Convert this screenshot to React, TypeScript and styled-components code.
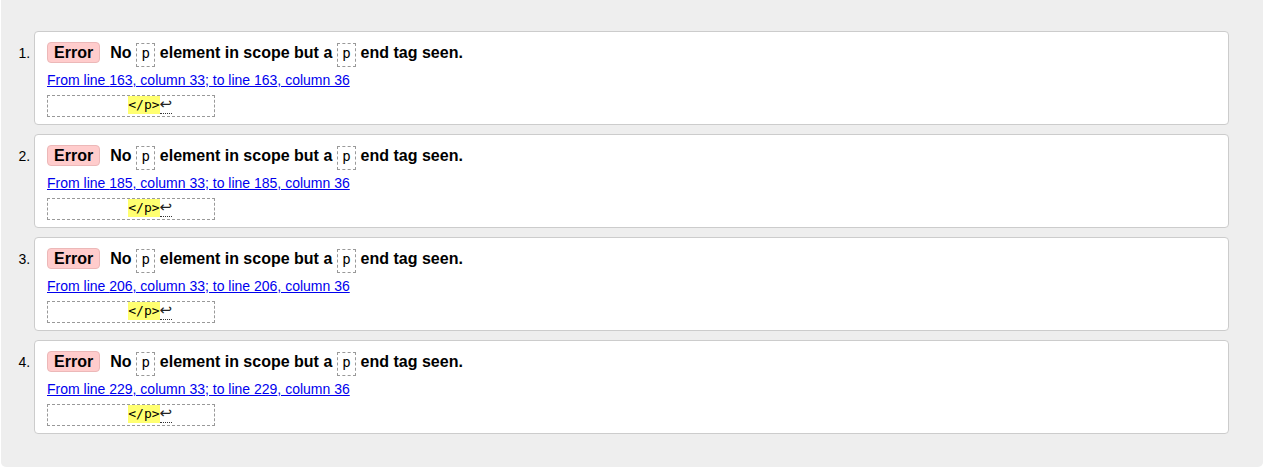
import React from "react";
import styled, { createGlobalStyle } from "styled-components";

const GlobalStyle = createGlobalStyle`
  html, body { margin: 0; padding: 0; background: #ffffff; }
  body { font-family: "Liberation Sans", Arial, sans-serif; }
`;

const Page = styled.div`
  margin-left: 1px;
  width: 1262px;
  height: 467px;
  background: #eeeeee;
  border-radius: 0 0 5px 5px;
  overflow: hidden;
`;

const List = styled.ol`
  margin: 0;
  padding: 31px 34px 0 33px;
  list-style: decimal outside;
`;

const Item = styled.li`
  box-sizing: border-box;
  height: 94px;
  margin: 0 0 9px;
  padding: 8px 12px 7px;
  background: #ffffff;
  border: 1px solid #cccccc;
  border-radius: 4px;
  font: 14px "Liberation Sans", Arial, sans-serif;
  color: #000000;
`;

const Message = styled.p`
  margin: 0;
  font-size: 16px;
  font-weight: 700;
  line-height: 26px;
  white-space: nowrap;
`;

const Badge = styled.strong`
  display: inline-block;
  line-height: 19px;
  padding: 0 6px;
  margin-right: 10px;
  border: 1px solid #ecb8b8;
  border-radius: 4px;
  background: #ffcccc;
`;

const Tag = styled.code`
  display: inline-block;
  box-sizing: border-box;
  height: 24px;
  padding: 1px 4.5px 0;
  line-height: 21px;
  border: 1px dashed #999999;
  font: 400 14px "DejaVu Sans Mono", monospace;
  color: #000000;
`;

const Location = styled.p`
  margin: 4px 0 0;
  line-height: 18px;
`;

const Link = styled.a`
  color: #0000ee;
  text-decoration: underline;
`;

const Extract = styled.code`
  display: block;
  box-sizing: border-box;
  width: 168px;
  height: 22px;
  margin-top: 6px;
  padding-left: 2px;
  border: 1px dashed #999999;
  font: 13px "DejaVu Sans Mono", monospace;
  line-height: 20px;
  white-space: pre;
  color: #000000;
`;

const Highlight = styled.mark`
  display: inline-block;
  vertical-align: 1px;
  line-height: 18px;
  background: #ffff70;
  color: #000000;
`;

const LineBreak = styled.span`
  display: inline-block;
  vertical-align: 1px;
  line-height: 17px;
  font: 15px "DejaVu Sans", sans-serif;
  line-height: 17px;
  border-bottom: 1px dotted #333333;
  color: #222222;
`;

const errors = [
  { line: 163 },
  { line: 185 },
  { line: 206 },
  { line: 229 },
];

export default function App() {
  return (
    <>
      <GlobalStyle />
      <Page>
        <List>
          {errors.map((e) => (
            <Item key={e.line}>
              <Message>
                <Badge>Error</Badge>No <Tag>p</Tag> element in scope but a{" "}
                <Tag>p</Tag> end tag seen.
              </Message>
              <Location>
                <Link href="#">
                  From line {e.line}, column 33; to line {e.line}, column 36
                </Link>
              </Location>
              <Extract>
                {"          "}
                <Highlight>&lt;/p&gt;</Highlight>
                <LineBreak>↩</LineBreak>
              </Extract>
            </Item>
          ))}
        </List>
      </Page>
    </>
  );
}
